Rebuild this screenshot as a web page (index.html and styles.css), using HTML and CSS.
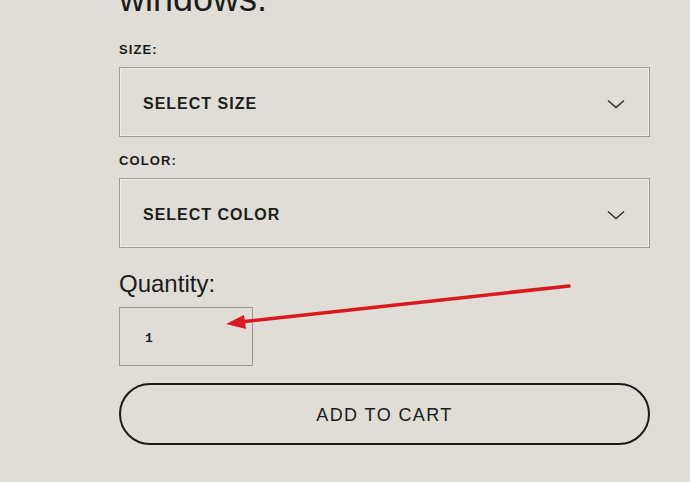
FILE: index.html
```html
<!DOCTYPE html>
<html lang="en">
<head>
<meta charset="utf-8">
<title>Product options</title>
<link rel="stylesheet" href="styles.css">
</head>
<body>
<div class="page">
  <form class="product">
    <h1 class="product-title">windows.</h1>

    <label class="field-label">SIZE:</label>
    <div class="select">
      <span class="select-text">SELECT SIZE</span>
      <svg class="chevron" width="18" height="10" viewBox="0 0 18 10"><path d="M1 1.5 L9 8.5 L17 1.5" fill="none" stroke="#2d2d2b" stroke-width="1.4"/></svg>
    </div>

    <label class="field-label">COLOR:</label>
    <div class="select">
      <span class="select-text">SELECT COLOR</span>
      <svg class="chevron" width="18" height="10" viewBox="0 0 18 10"><path d="M1 1.5 L9 8.5 L17 1.5" fill="none" stroke="#2d2d2b" stroke-width="1.4"/></svg>
    </div>

    <label class="qty-label">Quantity:</label>
    <div class="qty-box"><span class="qty-value">1</span></div>

    <button type="button" class="add-btn">ADD TO CART</button>
  </form>

  <svg class="annotation" width="690" height="482" viewBox="0 0 690 482">
    <line x1="569" y1="286" x2="240" y2="322" stroke="#d9191c" stroke-width="3.6" stroke-linecap="round"/>
    <polygon points="226,324 244,315 246,329" fill="#d9191c"/>
  </svg>
</div>
</body>
</html>
```
FILE: styles.css
```css
html, body {
  margin: 0;
  padding: 0;
  background: #dfddd5;
}

.page {
  position: relative;
  width: 690px;
  height: 482px;
  overflow: hidden;
  background: #dfddd5;
}

.product {
  display: flex;
  flex-direction: column;
  align-items: flex-start;
  width: 531px;
  padding-left: 119px;
  font-family: "Liberation Sans", Arial, sans-serif;
  color: #1b1b1a;
}

.product-title {
  margin: -23px 0 0 0;
  font-size: 36px;
  line-height: 43px;
  font-weight: 400;
  letter-spacing: 0;
}

.field-label {
  display: block;
  margin-top: 22px;
  font-size: 13px;
  line-height: 16px;
  font-weight: 700;
  letter-spacing: 1.1px;
}

.select + .field-label {
  margin-top: 16px;
}

.select {
  box-sizing: border-box;
  display: flex;
  align-items: center;
  justify-content: space-between;
  width: 531px;
  height: 70px;
  margin-top: 9px;
  padding: 4px 24px 0 23px;
  border: 1px solid #9c9a94;
  box-shadow: inset 0 0 0 1px #ecebe5;
}

.select-text {
  font-size: 16px;
  font-weight: 700;
  letter-spacing: 1px;
  color: #1d1d1c;
}

.chevron {
  display: block;
}

.qty-label {
  display: block;
  margin-top: 22px;
  font-size: 24px;
  line-height: 28px;
  font-weight: 400;
}

.qty-box {
  box-sizing: border-box;
  display: flex;
  align-items: center;
  width: 134px;
  height: 59px;
  margin-top: 9px;
  padding: 3px 0 0 25px;
  border: 1px solid #9c9a94;
}

.qty-value {
  font-family: "Liberation Mono", "DejaVu Sans Mono", monospace;
  font-size: 13px;
  font-weight: 700;
  color: #1d1d1c;
}

.add-btn {
  box-sizing: border-box;
  width: 531px;
  height: 62px;
  margin-top: 17px;
  padding: 2px 0 0 0;
  border: 2px solid #1b1b1a;
  border-radius: 31px;
  background: transparent;
  font-family: "Liberation Sans", Arial, sans-serif;
  font-size: 18px;
  letter-spacing: 1.4px;
  color: #1b1b1a;
}

.annotation {
  position: absolute;
  left: 0;
  top: 0;
  pointer-events: none;
}
```
